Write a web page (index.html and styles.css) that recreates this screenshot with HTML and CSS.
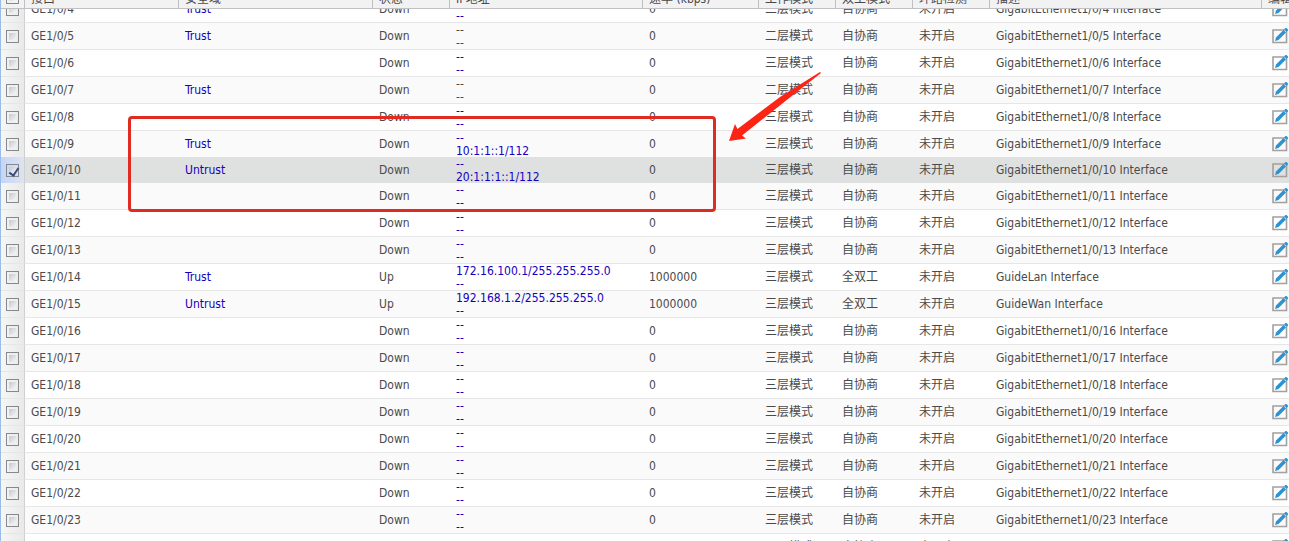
FILE: index.html
```html
<!DOCTYPE html>
<html lang="zh-CN">
<head>
  <meta charset="UTF-8">
  <meta name="viewport" content="width=device-width, initial-scale=1.0">
  <title>接口</title>
  <link rel="stylesheet" href="styles.css">
</head>
<body>

  <svg class="sprite" aria-hidden="true">
    <symbol id="icon-edit" viewBox="0 0 16 16">
      <path d="M1 2H14.500V14.500H1Z" fill="none" stroke="#a3a09f" stroke-width="1.600"/>
      <path d="M3 13L4 9.500L11.500 2L14 4.500L6.500 12Z" fill="#2b93d3"/>
      <path d="M12.200 1.300L13.500 0H14.500L16 1.500V2.500L14.700 3.800Z" fill="#2b93d3"/>
    </symbol>
  </svg>

  <div class="grid">
    <div class="grid-header">
      <table class="grid-table">
        <colgroup>
          <col class="col-check"><col class="col-name"><col class="col-zone"><col class="col-short"><col class="col-ip">
          <col class="col-rate"><col class="col-short"><col class="col-short"><col class="col-short"><col><col class="col-edit">
        </colgroup>
        <thead>
          <tr>
            <th class="check"><input type="checkbox" aria-label="全选"></th>
            <th>接口</th>
            <th>安全域</th>
            <th>状态</th>
            <th>IP地址</th>
            <th>速率 (kbps)</th>
            <th>工作模式</th>
            <th>双工模式</th>
            <th>环路检测</th>
            <th>描述</th>
            <th>编辑</th>
          </tr>
        </thead>
      </table>
    </div>

    <div class="grid-body">
      <table class="grid-table">
        <colgroup>
          <col class="col-check"><col class="col-name"><col class="col-zone"><col class="col-short"><col class="col-ip">
          <col class="col-rate"><col class="col-short"><col class="col-short"><col class="col-short"><col><col class="col-edit">
        </colgroup>
        <tbody id="rows"></tbody>
      </table>
    </div>

    <div class="mark-box"></div>
    <svg class="mark-arrow" width="94" height="72" viewBox="0 0 94 72" aria-hidden="true">
      <path d="M1 70L7 53L9.500 58L52 26L92 1L93 2L60 28L14 64.500L18 67.500Z" fill="#fb2415"/>
    </svg>
  </div>

  <script>
    // values that differ from a plain, unconfigured port
    const ports = {
      4: { zone: 'Trust' },
      5: { zone: 'Trust', mode: '二层模式' },
      7: { zone: 'Trust', mode: '二层模式' },
      9: { zone: 'Trust', ipv6: '10:1:1::1/112' },
      10: { zone: 'Untrust', ipv6: '20:1:1:1::1/112', selected: true },
      14: { zone: 'Trust', ip: '172.16.100.1/255.255.255.0', up: true, desc: 'GuideLan Interface' },
      15: { zone: 'Untrust', ip: '192.168.1.2/255.255.255.0', up: true, desc: 'GuideWan Interface' }
    };

    function address(value, layer2) {
      return layer2 ? `<span>${value}</span>` : `<a href="#">${value}</a>`;
    }

    let html = '';
    for (let i = 4; i <= 24; i++) {
      const p = ports[i] || {};
      const name = 'GE1/0/' + i;
      const layer2 = p.mode === '二层模式';
      html += `
        <tr class="${p.selected ? 'selected' : ''}">
          <td class="check"><input type="checkbox" aria-label="${name}" ${p.selected ? 'checked' : ''}></td>
          <td>${name}</td>
          <td>${p.zone ? `<a href="#">${p.zone}</a>` : ''}</td>
          <td>${p.up ? 'Up' : 'Down'}</td>
          <td class="ip">${address(p.ip || '--', layer2)}${address(p.ipv6 || '--', layer2)}</td>
          <td>${p.up ? '1000000' : '0'}</td>
          <td>${p.mode || '三层模式'}</td>
          <td>${p.up ? '全双工' : '自协商'}</td>
          <td>未开启</td>
          <td>${p.desc || `GigabitEthernet1/0/${i} Interface`}</td>
          <td class="edit"><button type="button" aria-label="编辑 ${name}"><svg><use href="#icon-edit"/></svg></button></td>
        </tr>`;
    }
    document.getElementById('rows').innerHTML = html;
  </script>

</body>
</html>
```

FILE: styles.css
```css
* {
  box-sizing: border-box;
}

body {
  margin: 0;
  font-family: "DejaVu Sans Condensed", "Noto Sans CJK SC", sans-serif;
  font-size: 12px;
  color: #4a4a4a;
  background-color: #fff;
}

.sprite {
  display: none;
}

.grid {
  position: relative;
  display: flex;
  flex-direction: column;
  height: 100vh;
  border-left: 1px solid #99bce8;
  overflow: hidden;
}

/* header is scrolled almost out of view */
.grid-header {
  flex: none;
  display: flex;
  align-items: flex-end;
  height: 9px;
  overflow: hidden;
  background-color: #f2f2f2;
  border-bottom: 1px solid #c0c0c4;
}

.grid-body {
  flex: 1;
  overflow: hidden;
}

.grid-body .grid-table {
  margin-top: -13px;
}

.grid-table {
  width: 100%;
  table-layout: fixed;
  border-collapse: separate;
  border-spacing: 0;
}

.col-check { width: 24px; }
.col-name { width: 154px; }
.col-zone { width: 194px; }
.col-short { width: 77px; }
.col-ip { width: 193px; }
.col-rate { width: 116px; }
.col-edit { width: 27px; }

th {
  height: 24px;
  padding: 0 0 1px 6px;
  vertical-align: bottom;
  font-weight: normal;
  text-align: left;
  line-height: 16px;
  white-space: nowrap;
  overflow: hidden;
  border-right: 1px solid #c0c0c4;
}

th:last-child {
  border-right: none;
}

td {
  height: 27px;
  padding: 0 0 0 6px;
  line-height: 16px;
  white-space: nowrap;
  overflow: hidden;
  border-bottom: 1px solid #e6e6e6;
}

tr:nth-child(even) td {
  background-color: #fafafa;
}

/* rows next to the selection lose their separator */
tr:has(+ .selected) td,
.selected td {
  height: 26px;
  border-bottom: none;
}

tr.selected td {
  background-color: #dfe1e0;
}

.selected + tr td {
  background-color: #fafafa;
}

td.check,
tr:nth-child(even) td.check {
  padding: 1px 0 0 5px;
  background: linear-gradient(to right, #f6f6f6, #e9e9e9);
  border-right: 1px solid #d0d0d0;
}

tr.selected td.check {
  background: linear-gradient(to right, #c4d6f8, #dde3ef);
}

th.check {
  padding: 0 0 4px 5px;
}

input[type="checkbox"] {
  appearance: none;
  display: block;
  width: 13px;
  height: 13px;
  margin: 0;
  border: 1px solid #85898c;
  background: linear-gradient(135deg, #c3c9d0, #f6f6f6) content-box #f4f4f4;
  padding: 2px;
}

input[type="checkbox"]:checked::before {
  content: "";
  display: block;
  width: 4px;
  height: 8px;
  margin: -1px 0 0 2px;
  border: solid #3a4a7c;
  border-width: 0 2px 2px 0;
  transform: rotate(35deg);
}

a {
  color: #1400c0;
  text-decoration: none;
}

td.ip {
  padding-top: 1px;
}

.ip a,
.ip span {
  display: block;
  line-height: 13px;
}

/* both address lines fill the row, so let the second one reach the border */
.ip a:last-child,
.ip span:last-child {
  margin-bottom: -1px;
}

td.edit {
  padding: 0 0 0 10px;
}

.edit button {
  display: block;
  width: 16px;
  height: 16px;
  padding: 0;
  border: none;
  background: none;
  cursor: pointer;
}

.edit svg {
  display: block;
  width: 16px;
  height: 16px;
}

.mark-box {
  position: absolute;
  left: 127px;
  top: 116px;
  width: 588px;
  height: 96px;
  border: 3px solid #e02c20;
  border-radius: 4px;
  pointer-events: none;
}

.mark-arrow {
  position: absolute;
  left: 727px;
  top: 71px;
  pointer-events: none;
}
```
